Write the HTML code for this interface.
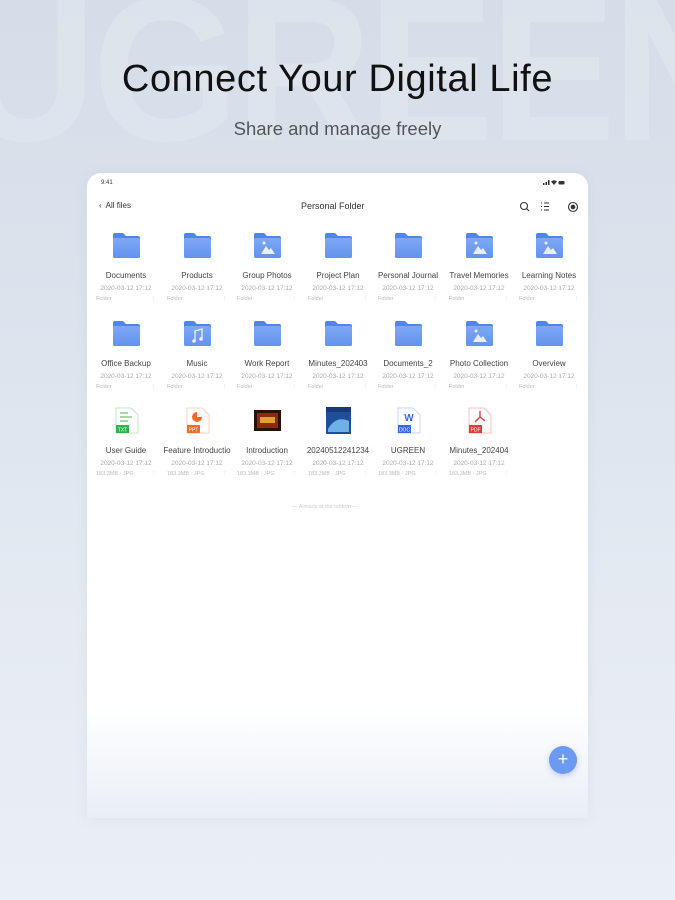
<!DOCTYPE html>
<html><head><meta charset="utf-8"><style>
*{margin:0;padding:0;box-sizing:border-box}
html,body{width:675px;height:900px;overflow:hidden}
body{position:relative;font-family:"Liberation Sans",sans-serif;background:linear-gradient(180deg,#d4dde8 0%,#dde4ee 40%,#e6ebf3 70%,#eaeef6 100%)}
.bgw{position:absolute;left:0;top:0;width:675px;height:200px;overflow:hidden}
.bg{position:absolute;left:-40px;top:-48px;font-size:205px;font-weight:bold;color:#e2e8ef;opacity:.6;letter-spacing:-4px;white-space:nowrap;transform:scaleX(.92);transform-origin:0 0}
h1{position:absolute;top:58px;width:100%;text-align:center;font-size:38px;font-weight:normal;color:#111;letter-spacing:.6px}
.sub{position:absolute;top:118px;width:100%;text-align:center;font-size:18.5px;color:#555}
.card{position:absolute;left:87px;top:173px;width:501px;height:645px;border-radius:14px 14px 0 0;background:linear-gradient(180deg,#fff 0%,#fff 83%,#f3f6fa 92%,#eaeef5 100%);box-shadow:0 0 12px rgba(150,165,190,.15)}
.t{position:absolute;font-size:7px;color:#333}
.cell{position:absolute;width:66px;text-align:center}
.cell .nm{position:absolute;top:39px;left:-4px;width:74px;font-size:8px;color:#444;white-space:nowrap;overflow:hidden}
.cell .dt{position:absolute;top:53px;left:0;width:66px;font-size:6.5px;color:#aaa;white-space:nowrap}
.cell .mt{position:absolute;top:64px;left:3px;width:60px;font-size:5.5px;color:#bbb;text-align:left}
.cell .mt b{position:absolute;right:0;font-weight:normal}
.ic{position:absolute;left:19px;top:0;width:29px;height:27px}
.fab{position:absolute;left:549px;top:746px;width:28px;height:28px;border-radius:50%;background:#6b9af2;color:#fff;text-align:center;line-height:27px;font-size:18px;box-shadow:0 2px 6px rgba(90,130,230,.35)}
</style></head><body>
<div class="bgw"><div class="bg">UGREEN</div></div>
<h1>Connect Your Digital Life</h1>
<div class="sub">Share and manage freely</div>
<div class="card">
<div class="t" style="left:14px;top:7px;font-size:6px">9:41</div>
<svg style="position:absolute;left:456px;top:7px" width="22" height="6"><rect x="0" y="3" width="1.5" height="2" fill="#333"/><rect x="2.5" y="2" width="1.5" height="3" fill="#333"/><rect x="5" y="0" width="1.5" height="5" fill="#333"/><path d="M8 1.5 Q11 -1 14 1.5 L11 5Z" fill="#333"/><rect x="15.5" y="1" width="6" height="3.5" rx="1" fill="#333"/></svg>
<div class="t" style="left:12px;top:28px;font-size:8px">&#8249;&nbsp; All files</div>
<div class="t" style="left:214px;top:28px;font-size:9px">Personal Folder</div>
<svg style="position:absolute;left:432px;top:28px" width="60" height="12" fill="none" stroke="#333" stroke-width="1.1"><circle cx="5" cy="5" r="3.5"/><path d="M7.5 7.5 L10 10"/><path d="M22 2h1M25 2h5M22 5.5h1M25 5.5h5M22 9h1M25 9h5"/><circle cx="54" cy="6" r="4.5"/><circle cx="54" cy="6" r="1.8" fill="#333"/></svg>
<div style="position:absolute;left:205px;top:331px;font-size:5.5px;color:#ccc">— Already at the bottom —</div>
</div>
<div class="fab">+</div>
<svg width="0" height="0" style="position:absolute"><defs>
<linearGradient id="fg" x1="0" y1="0" x2="0" y2="1"><stop offset="0" stop-color="#7fa9f5"/><stop offset="1" stop-color="#6392ee"/></linearGradient>
</defs></svg>
<div style="position:absolute;left:0;top:0">
<div class="cell" style="left:93px;top:232px"><svg class="ic"><path d="M1 3 Q1 1 3 1 H11 L14 4 H26 Q28 4 28 6 V24 Q28 26 26 26 H3 Q1 26 1 24Z" fill="#4f86ea"/><rect x="1" y="6" width="27" height="20" rx="2" fill="url(#fg)"/></svg><div class="nm">Documents</div><div class="dt">2020-03-12 17:12</div><div class="mt">Folder<b>⋮</b></div></div>
<div class="cell" style="left:164px;top:232px"><svg class="ic"><path d="M1 3 Q1 1 3 1 H11 L14 4 H26 Q28 4 28 6 V24 Q28 26 26 26 H3 Q1 26 1 24Z" fill="#4f86ea"/><rect x="1" y="6" width="27" height="20" rx="2" fill="url(#fg)"/></svg><div class="nm">Products</div><div class="dt">2020-03-12 17:12</div><div class="mt">Folder<b>⋮</b></div></div>
<div class="cell" style="left:234px;top:232px"><svg class="ic"><path d="M1 3 Q1 1 3 1 H11 L14 4 H26 Q28 4 28 6 V24 Q28 26 26 26 H3 Q1 26 1 24Z" fill="#4f86ea"/><rect x="1" y="6" width="27" height="20" rx="2" fill="url(#fg)"/><path d="M8 22 L13 14 L16 18 L18 16 L22 22Z" fill="#e8f0ff"/><circle cx="11" cy="11" r="1.5" fill="#e8f0ff"/></svg><div class="nm">Group Photos</div><div class="dt">2020-03-12 17:12</div><div class="mt">Folder<b>⋮</b></div></div>
<div class="cell" style="left:305px;top:232px"><svg class="ic"><path d="M1 3 Q1 1 3 1 H11 L14 4 H26 Q28 4 28 6 V24 Q28 26 26 26 H3 Q1 26 1 24Z" fill="#4f86ea"/><rect x="1" y="6" width="27" height="20" rx="2" fill="url(#fg)"/></svg><div class="nm">Project Plan</div><div class="dt">2020-03-12 17:12</div><div class="mt">Folder<b>⋮</b></div></div>
<div class="cell" style="left:375px;top:232px"><svg class="ic"><path d="M1 3 Q1 1 3 1 H11 L14 4 H26 Q28 4 28 6 V24 Q28 26 26 26 H3 Q1 26 1 24Z" fill="#4f86ea"/><rect x="1" y="6" width="27" height="20" rx="2" fill="url(#fg)"/></svg><div class="nm">Personal Journal</div><div class="dt">2020-03-12 17:12</div><div class="mt">Folder<b>⋮</b></div></div>
<div class="cell" style="left:446px;top:232px"><svg class="ic"><path d="M1 3 Q1 1 3 1 H11 L14 4 H26 Q28 4 28 6 V24 Q28 26 26 26 H3 Q1 26 1 24Z" fill="#4f86ea"/><rect x="1" y="6" width="27" height="20" rx="2" fill="url(#fg)"/><path d="M8 22 L13 14 L16 18 L18 16 L22 22Z" fill="#e8f0ff"/><circle cx="11" cy="11" r="1.5" fill="#e8f0ff"/></svg><div class="nm">Travel Memories</div><div class="dt">2020-03-12 17:12</div><div class="mt">Folder<b>⋮</b></div></div>
<div class="cell" style="left:516px;top:232px"><svg class="ic"><path d="M1 3 Q1 1 3 1 H11 L14 4 H26 Q28 4 28 6 V24 Q28 26 26 26 H3 Q1 26 1 24Z" fill="#4f86ea"/><rect x="1" y="6" width="27" height="20" rx="2" fill="url(#fg)"/><path d="M8 22 L13 14 L16 18 L18 16 L22 22Z" fill="#e8f0ff"/><circle cx="11" cy="11" r="1.5" fill="#e8f0ff"/></svg><div class="nm">Learning Notes</div><div class="dt">2020-03-12 17:12</div><div class="mt">Folder<b>⋮</b></div></div>
<div class="cell" style="left:93px;top:320px"><svg class="ic"><path d="M1 3 Q1 1 3 1 H11 L14 4 H26 Q28 4 28 6 V24 Q28 26 26 26 H3 Q1 26 1 24Z" fill="#4f86ea"/><rect x="1" y="6" width="27" height="20" rx="2" fill="url(#fg)"/></svg><div class="nm">Office Backup</div><div class="dt">2020-03-12 17:12</div><div class="mt">Folder<b>⋮</b></div></div>
<div class="cell" style="left:164px;top:320px"><svg class="ic"><path d="M1 3 Q1 1 3 1 H11 L14 4 H26 Q28 4 28 6 V24 Q28 26 26 26 H3 Q1 26 1 24Z" fill="#4f86ea"/><rect x="1" y="6" width="27" height="20" rx="2" fill="url(#fg)"/><path d="M12 21 V11 L19 9 V19" stroke="#e8f0ff" stroke-width="1.3" fill="none"/><circle cx="11" cy="21" r="1.8" fill="#e8f0ff"/><circle cx="18" cy="19" r="1.8" fill="#e8f0ff"/></svg><div class="nm">Music</div><div class="dt">2020-03-12 17:12</div><div class="mt">Folder<b>⋮</b></div></div>
<div class="cell" style="left:234px;top:320px"><svg class="ic"><path d="M1 3 Q1 1 3 1 H11 L14 4 H26 Q28 4 28 6 V24 Q28 26 26 26 H3 Q1 26 1 24Z" fill="#4f86ea"/><rect x="1" y="6" width="27" height="20" rx="2" fill="url(#fg)"/></svg><div class="nm">Work Report</div><div class="dt">2020-03-12 17:12</div><div class="mt">Folder<b>⋮</b></div></div>
<div class="cell" style="left:305px;top:320px"><svg class="ic"><path d="M1 3 Q1 1 3 1 H11 L14 4 H26 Q28 4 28 6 V24 Q28 26 26 26 H3 Q1 26 1 24Z" fill="#4f86ea"/><rect x="1" y="6" width="27" height="20" rx="2" fill="url(#fg)"/></svg><div class="nm">Minutes_202403</div><div class="dt">2020-03-12 17:12</div><div class="mt">Folder<b>⋮</b></div></div>
<div class="cell" style="left:375px;top:320px"><svg class="ic"><path d="M1 3 Q1 1 3 1 H11 L14 4 H26 Q28 4 28 6 V24 Q28 26 26 26 H3 Q1 26 1 24Z" fill="#4f86ea"/><rect x="1" y="6" width="27" height="20" rx="2" fill="url(#fg)"/></svg><div class="nm">Documents_2</div><div class="dt">2020-03-12 17:12</div><div class="mt">Folder<b>⋮</b></div></div>
<div class="cell" style="left:446px;top:320px"><svg class="ic"><path d="M1 3 Q1 1 3 1 H11 L14 4 H26 Q28 4 28 6 V24 Q28 26 26 26 H3 Q1 26 1 24Z" fill="#4f86ea"/><rect x="1" y="6" width="27" height="20" rx="2" fill="url(#fg)"/><path d="M8 22 L13 14 L16 18 L18 16 L22 22Z" fill="#e8f0ff"/><circle cx="11" cy="11" r="1.5" fill="#e8f0ff"/></svg><div class="nm">Photo Collection</div><div class="dt">2020-03-12 17:12</div><div class="mt">Folder<b>⋮</b></div></div>
<div class="cell" style="left:516px;top:320px"><svg class="ic"><path d="M1 3 Q1 1 3 1 H11 L14 4 H26 Q28 4 28 6 V24 Q28 26 26 26 H3 Q1 26 1 24Z" fill="#4f86ea"/><rect x="1" y="6" width="27" height="20" rx="2" fill="url(#fg)"/></svg><div class="nm">Overview</div><div class="dt">2020-03-12 17:12</div><div class="mt">Folder<b>⋮</b></div></div>
<div class="cell" style="left:93px;top:407px"><svg class="ic"><path d="M4 1 H19 L26 8 V26 H4Z" fill="#fff" stroke="#bfe6c4"/><path d="M8 6h8M8 10h12M8 14h8" stroke="#4caf50" stroke-width="1"/><rect x="4" y="18" width="13" height="8" fill="#2fb34a"/><text x="10.5" y="24.5" font-size="5" fill="#fff" text-anchor="middle" font-family="Liberation Sans">TXT</text></svg><div class="nm">User Guide</div><div class="dt">2020-03-12 17:12</div><div class="mt">183.3MB · JPG<b>⋮</b></div></div>
<div class="cell" style="left:164px;top:407px"><svg class="ic"><path d="M4 1 H19 L26 8 V26 H4Z" fill="#fff" stroke="#fbd0b8"/><circle cx="14" cy="10" r="5" fill="#f26b2a"/><path d="M14 10 V5 A5 5 0 0 1 19 10Z" fill="#fff"/><rect x="4" y="18" width="13" height="8" fill="#f26b2a"/><text x="10.5" y="24.5" font-size="5" fill="#fff" text-anchor="middle" font-family="Liberation Sans">PPT</text></svg><div class="nm">Feature Introductio</div><div class="dt">2020-03-12 17:12</div><div class="mt">183.3MB · JPG<b>⋮</b></div></div>
<div class="cell" style="left:234px;top:407px"><svg class="ic"><rect x="1" y="3" width="27" height="21" fill="#2a1208"/><rect x="4" y="6" width="21" height="15" fill="#8a2a10"/><rect x="7" y="10" width="15" height="6" fill="#e0a030"/></svg><div class="nm">Introduction</div><div class="dt">2020-03-12 17:12</div><div class="mt">183.3MB · JPG<b>⋮</b></div></div>
<div class="cell" style="left:305px;top:407px"><svg class="ic"><rect x="2" y="0" width="25" height="27" fill="#1f4f9a"/><path d="M4 22 Q12 8 25 14 V25 H4Z" fill="#6fb0e8"/><rect x="2" y="0" width="25" height="5" fill="#163a78"/></svg><div class="nm">20240512241234</div><div class="dt">2020-03-12 17:12</div><div class="mt">183.3MB · JPG<b>⋮</b></div></div>
<div class="cell" style="left:375px;top:407px"><svg class="ic"><path d="M4 1 H19 L26 8 V26 H4Z" fill="#fff" stroke="#c5d5fa"/><text x="15" y="14" font-size="10" font-weight="bold" fill="#3468e8" text-anchor="middle" font-family="Liberation Sans">W</text><rect x="4" y="18" width="13" height="8" fill="#3468e8"/><text x="10.5" y="24.5" font-size="5" fill="#fff" text-anchor="middle" font-family="Liberation Sans">DOC</text></svg><div class="nm">UGREEN</div><div class="dt">2020-03-12 17:12</div><div class="mt">183.3MB · JPG<b>⋮</b></div></div>
<div class="cell" style="left:446px;top:407px"><svg class="ic"><path d="M4 1 H19 L26 8 V26 H4Z" fill="#fff" stroke="#f7c0c0"/><path d="M15 4 L15 10 L10 15 M15 10 L20 14" stroke="#e53935" stroke-width="1.4" fill="none"/><rect x="4" y="18" width="13" height="8" fill="#e53935"/><text x="10.5" y="24.5" font-size="5" fill="#fff" text-anchor="middle" font-family="Liberation Sans">PDF</text></svg><div class="nm">Minutes_202404</div><div class="dt">2020-03-12 17:12</div><div class="mt">183.3MB · JPG<b>⋮</b></div></div>
</div>
</body></html>
